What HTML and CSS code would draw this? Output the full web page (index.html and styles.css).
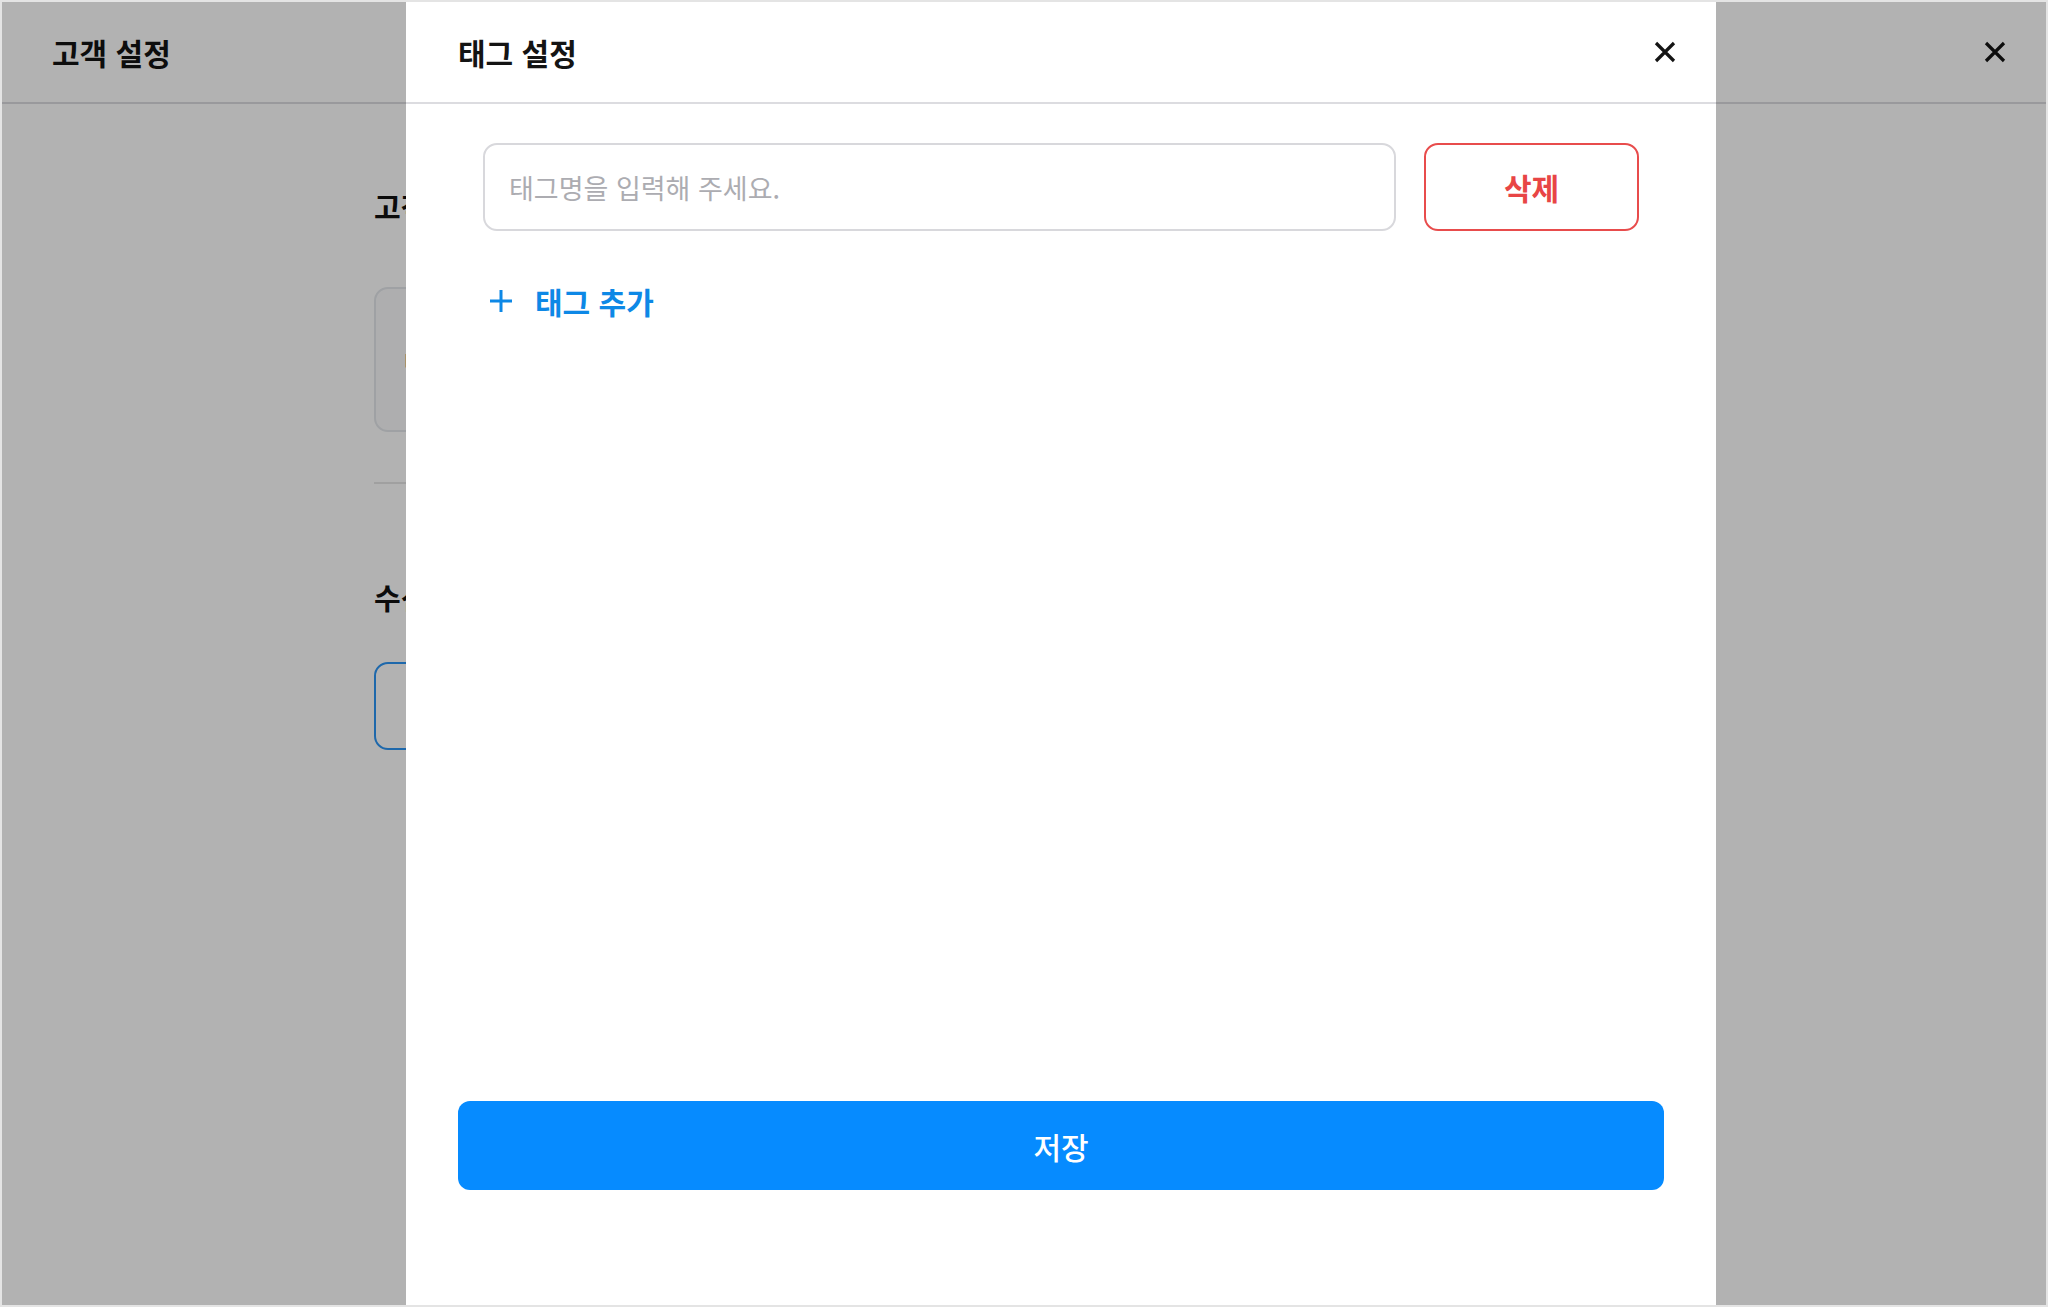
FILE: index.html
```html
<!DOCTYPE html>
<html lang="ko">
<head>
    <meta charset="UTF-8">
    <meta name="viewport" content="width=device-width, initial-scale=1.0">
    <title>태그 설정</title>
    <link rel="stylesheet" href="styles.css">
</head>
<body>

    <div class="screen">
        <!-- 고객 설정 화면 (모달 뒤) -->
        <div class="page">
            <header class="page-header">
                <h1 class="page-title">고객 설정</h1>
                <button class="icon-btn" type="button" aria-label="닫기">
                    <svg width="22" height="22" viewBox="0 0 22 22"><path d="M2 2L20 20M20 2L2 20" stroke="currentColor" stroke-width="3.2" fill="none"/></svg>
                </button>
            </header>

            <main class="page-body">
                <h2 class="section-title">고객 태그</h2>
                <div class="tag-card">
                    <span class="tag-card-text">태그가 없습니다.</span>
                </div>

                <hr class="divider">

                <h2 class="section-title section-title--second">수신 동의</h2>
                <div class="select-box"></div>
            </main>
        </div>

        <div class="dim"></div>

        <!-- 태그 설정 모달 -->
        <div class="modal">
            <header class="modal-header">
                <h2 class="modal-title">태그 설정</h2>
                <button class="icon-btn" type="button" aria-label="닫기">
                    <svg width="22" height="22" viewBox="0 0 22 22"><path d="M2 2L20 20M20 2L2 20" stroke="currentColor" stroke-width="3.2" fill="none"/></svg>
                </button>
            </header>

            <div class="modal-body">
                <div class="tag-row">
                    <input class="tag-input" type="text" placeholder="태그명을 입력해 주세요.">
                    <button class="btn-delete" type="button">삭제</button>
                </div>

                <button class="btn-add" type="button">
                    <svg width="24" height="24" viewBox="0 0 24 24"><path d="M12 1V23M1 12H23" stroke="currentColor" stroke-width="3" fill="none"/></svg>
                    태그 추가
                </button>
            </div>

            <footer class="modal-footer">
                <button class="btn-save" type="submit">저장</button>
            </footer>
        </div>
    </div>

</body>
</html>
```

FILE: styles.css
```css
body {
    margin: 0;
    padding: 0;
    font-family: "Noto Sans CJK KR", "Noto Sans", sans-serif;
    color: #111111;
    background-color: #ffffff;
}

button, input {
    font-family: inherit;
}

.screen {
    position: relative;
    width: 2048px;
    height: 1307px;
    border: 2px solid #e4e4e4;
    box-sizing: border-box;
    overflow: hidden;
    background-color: #ffffff;
}

/* 뒤쪽 화면 */
.page-header {
    display: flex;
    align-items: center;
    justify-content: space-between;
    height: 102px;
    padding: 0 40px 0 50px;
    border-bottom: 2px solid #dcdce0;
    box-sizing: border-box;
}

.page-title, .modal-title {
    margin: 0;
    font-size: 30px;
    font-weight: 700;
    color: #141414;
}

.icon-btn {
    display: flex;
    padding: 0;
    border: none;
    background: none;
    color: #141414;
    cursor: pointer;
}

.page-body {
    width: 1300px;
    margin: 0 auto;
}

.section-title {
    margin: 82px 0 0;
    font-size: 29px;
    font-weight: 700;
    line-height: 40px;
}

.section-title--second {
    margin-top: 93px;
}

.tag-card {
    display: flex;
    align-items: center;
    height: 145px;
    margin-top: 61px;
    padding: 0 28px;
    border: 2px solid #e4e7eb;
    border-radius: 14px;
    background-color: #f9fafb;
    box-sizing: border-box;
}

.tag-card-text {
    font-size: 22px;
    color: #222222;
}

.divider {
    margin: 50px 0 0;
    border: none;
    border-top: 2px solid #e6e6e6;
}

.select-box {
    height: 88px;
    margin-top: 45px;
    border: 2px solid #2c96f5;
    border-radius: 14px;
    box-sizing: border-box;
}

.dim {
    position: absolute;
    inset: 0;
    background-color: rgba(0, 0, 0, 0.3);
}

/* 모달 */
.modal {
    position: absolute;
    top: 0;
    bottom: 0;
    left: 404px;
    width: 1310px;
    display: flex;
    flex-direction: column;
    background-color: #ffffff;
}

.modal-header {
    display: flex;
    align-items: center;
    justify-content: space-between;
    height: 102px;
    padding: 0 40px 0 52px;
    border-bottom: 2px solid #dcdce0;
    box-sizing: border-box;
    flex-shrink: 0;
}

.modal-body {
    flex: 1;
    padding: 39px 77px 0;
}

.tag-row {
    display: flex;
    gap: 28px;
}

.tag-input {
    flex: 1;
    height: 88px;
    padding: 0 24px;
    border: 2px solid #d8d8dc;
    border-radius: 14px;
    font-size: 27px;
    color: #222222;
    box-sizing: border-box;
    outline: none;
}

.tag-input::placeholder {
    color: #acacb1;
}

.btn-delete {
    width: 215px;
    height: 88px;
    border: 2px solid #e84c4c;
    border-radius: 14px;
    background-color: #ffffff;
    color: #e84545;
    font-size: 30px;
    font-weight: 700;
    cursor: pointer;
}

.btn-add {
    display: flex;
    align-items: center;
    gap: 22px;
    margin-top: 50px;
    padding: 0 0 0 6px;
    border: none;
    background: none;
    color: #0d88e6;
    font-size: 30px;
    font-weight: 700;
    line-height: 40px;
    cursor: pointer;
}

.modal-footer {
    padding: 0 52px 115px;
}

.btn-save {
    width: 100%;
    height: 89px;
    border: none;
    border-radius: 12px;
    background-color: #068bff;
    color: #ffffff;
    font-size: 30px;
    font-weight: 500;
    cursor: pointer;
}
```
